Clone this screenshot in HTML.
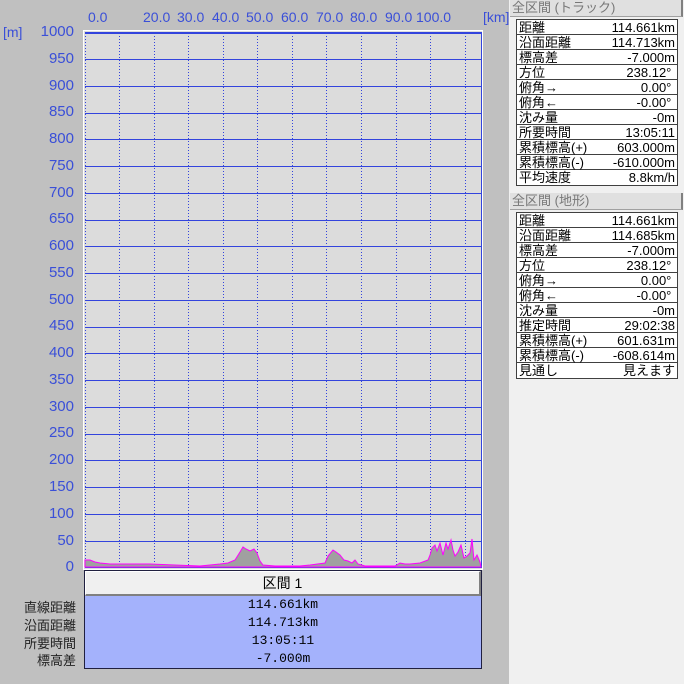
<!DOCTYPE html>
<html><head><meta charset="utf-8"><style>
*{margin:0;padding:0;box-sizing:border-box}
body{width:684px;height:684px;background:#c0c0c0;position:relative;overflow:hidden;font-family:"Liberation Sans","Noto Sans CJK JP",sans-serif;font-size:13px}
.a{position:absolute}
.yl{position:absolute;right:610px;color:#3a4fd8;font-size:15px;line-height:14px}
.xl{position:absolute;top:9px;color:#3a4fd8;font-size:14px}
#rp{position:absolute;left:509px;top:0;width:175px;height:684px;background:#f0f0f0}
.hd{position:absolute;left:1px;width:173px;height:17px;background:#e0e0e0;border-right:2px solid #808080;border-bottom:1px solid #a0a0a0;color:#777;font-size:13px;line-height:16px;padding-left:2px}
.tb{position:absolute;left:7px;width:162px;border:1px solid #404040;background:#fff}
.r{height:15px;border-bottom:1px solid #404040;display:flex;justify-content:space-between;font-size:13px;line-height:15px;padding:0 2px}
.r:last-child{border-bottom:none}
.bl{position:absolute;left:0;width:76px;text-align:right;color:#222;font-size:13px}
.bv{height:18px;text-align:center;font-size:13px;line-height:18px;font-family:"Liberation Mono",monospace}
</style></head><body>
<div class="a" style="left:3px;top:24px;color:#3a4fd8;font-size:14px">[m]</div>
<div class="yl" style="top:25px">1000</div>
<div class="yl" style="top:52px">950</div>
<div class="yl" style="top:79px">900</div>
<div class="yl" style="top:105px">850</div>
<div class="yl" style="top:132px">800</div>
<div class="yl" style="top:159px">750</div>
<div class="yl" style="top:186px">700</div>
<div class="yl" style="top:212px">650</div>
<div class="yl" style="top:239px">600</div>
<div class="yl" style="top:266px">550</div>
<div class="yl" style="top:293px">500</div>
<div class="yl" style="top:319px">450</div>
<div class="yl" style="top:346px">400</div>
<div class="yl" style="top:373px">350</div>
<div class="yl" style="top:400px">300</div>
<div class="yl" style="top:426px">250</div>
<div class="yl" style="top:453px">200</div>
<div class="yl" style="top:480px">150</div>
<div class="yl" style="top:507px">100</div>
<div class="yl" style="top:534px">50</div>
<div class="yl" style="top:560px">0</div>
<div class="xl" style="left:88px">0.0</div>
<div class="xl" style="left:143px">20.0</div>
<div class="xl" style="left:177px">30.0</div>
<div class="xl" style="left:212px">40.0</div>
<div class="xl" style="left:246px">50.0</div>
<div class="xl" style="left:281px">60.0</div>
<div class="xl" style="left:316px">70.0</div>
<div class="xl" style="left:350px">80.0</div>
<div class="xl" style="left:385px">90.0</div>
<div class="xl" style="left:416px">100.0</div>
<div class="xl" style="left:483px">[km]</div>
<svg class="a" style="left:0;top:0" width="500" height="570" shape-rendering="crispEdges">
<rect x="83" y="30" width="400" height="540" fill="#fff"/>
<rect x="84" y="31" width="398" height="538" fill="#dcdcdc"/>
<g fill="#3344dd">
<rect x="85" y="32" width="397" height="2"/>
<rect x="85" y="59" width="396" height="1"/><rect x="85" y="86" width="396" height="1"/><rect x="85" y="113" width="396" height="1"/><rect x="85" y="139" width="396" height="1"/><rect x="85" y="166" width="396" height="1"/><rect x="85" y="193" width="396" height="1"/><rect x="85" y="220" width="396" height="1"/><rect x="85" y="246" width="396" height="1"/><rect x="85" y="273" width="396" height="1"/><rect x="85" y="300" width="396" height="1"/><rect x="85" y="327" width="396" height="1"/><rect x="85" y="353" width="396" height="1"/><rect x="85" y="380" width="396" height="1"/><rect x="85" y="407" width="396" height="1"/><rect x="85" y="434" width="396" height="1"/><rect x="85" y="460" width="396" height="1"/><rect x="85" y="487" width="396" height="1"/><rect x="85" y="514" width="396" height="1"/><rect x="85" y="541" width="396" height="1"/>
<rect x="481" y="32" width="1" height="536"/>
<rect x="85" y="567" width="397" height="1"/>
</g>
<path stroke="#3344dd" stroke-width="1" d="M119.5 33V567M154.5 33V567M188.5 33V567M223.5 33V567M257.5 33V567M292.5 33V567M326.5 33V567M361.5 33V567M396.5 33V567M430.5 33V567M465.5 33V567M85.5 33V567" stroke-dasharray="1 2"/>
<polygon fill="#a0a0a0" stroke="#ff00ff" stroke-width="1" shape-rendering="auto" points="85,567 85,560 90,560 95,562 100,563 110,564 130,564 150,564 175,565 200,566 220,564 228,563 235,560 240,552 243,547 246,549 250,551 254,549 257,553 260,561 263,565 275,566 300,566 310,565 325,563 328,556 333,550 336,552 340,555 344,560 348,561 352,563 355,560 358,564 365,566 380,566 395,566 400,563 405,564 410,564 420,563 428,560 430,555 432,548 435,545 437,551 440,543 443,555 446,543 448,549 451,540 453,550 455,556 458,552 461,545 464,558 467,556 470,553 472,539 474,560 477,555 480,562 481,567"/>
</svg>
<div class="a" style="left:84px;top:570px;width:398px;height:99px;border:1px solid #202040;background:#a4b2fc">
<div style="height:25px;background:#f0f0f0;border:1px solid #fff;border-right:2px solid #808080;border-bottom:2px solid #808080;text-align:center;line-height:22px;font-size:14px">区間 1</div>
<div class="bv">114.661km</div><div class="bv">114.713km</div><div class="bv">13:05:11</div><div class="bv">-7.000m</div>
</div>
<div class="bl" style="top:597px">直線距離</div>
<div class="bl" style="top:615px">沿面距離</div>
<div class="bl" style="top:633px">所要時間</div>
<div class="bl" style="top:650px">標高差</div>
<div id="rp">
<div class="hd" style="top:0">全区間 (トラック)</div>
<div class="tb" style="top:19px">
<div class="r"><span>距離</span><span>114.661km</span></div>
<div class="r"><span>沿面距離</span><span>114.713km</span></div>
<div class="r"><span>標高差</span><span>-7.000m</span></div>
<div class="r"><span>方位</span><span>238.12°&nbsp;</span></div>
<div class="r"><span>俯角→</span><span>0.00°&nbsp;</span></div>
<div class="r"><span>俯角←</span><span>-0.00°&nbsp;</span></div>
<div class="r"><span>沈み量</span><span>-0m</span></div>
<div class="r"><span>所要時間</span><span>13:05:11</span></div>
<div class="r"><span>累積標高(+)</span><span>603.000m</span></div>
<div class="r"><span>累積標高(-)</span><span>-610.000m</span></div>
<div class="r"><span>平均速度</span><span>8.8km/h</span></div>
</div>
<div class="hd" style="top:193px">全区間 (地形)</div>
<div class="tb" style="top:212px">
<div class="r"><span>距離</span><span>114.661km</span></div>
<div class="r"><span>沿面距離</span><span>114.685km</span></div>
<div class="r"><span>標高差</span><span>-7.000m</span></div>
<div class="r"><span>方位</span><span>238.12°&nbsp;</span></div>
<div class="r"><span>俯角→</span><span>0.00°&nbsp;</span></div>
<div class="r"><span>俯角←</span><span>-0.00°&nbsp;</span></div>
<div class="r"><span>沈み量</span><span>-0m</span></div>
<div class="r"><span>推定時間</span><span>29:02:38</span></div>
<div class="r"><span>累積標高(+)</span><span>601.631m</span></div>
<div class="r"><span>累積標高(-)</span><span>-608.614m</span></div>
<div class="r"><span>見通し</span><span>見えます</span></div>
</div>
</div>
</body></html>
